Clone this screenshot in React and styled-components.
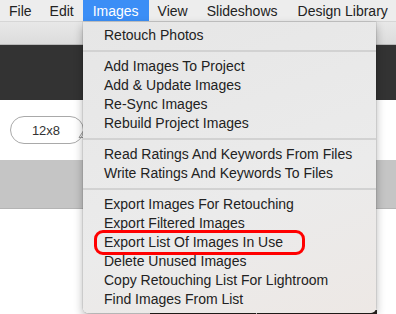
import React from 'react';
import styled, {createGlobalStyle} from 'styled-components';

const GlobalStyle = createGlobalStyle`
  html, body {
    margin: 0;
    padding: 0;
    background: #ffffff;
    font-family: "Liberation Sans", Arial, sans-serif;
    overflow: hidden;
  }
`;

const Screen = styled.div`
  position: relative;
  width: 396px;
  height: 314px;
  overflow: hidden;
  display: flex;
  flex-direction: column;
`;

const MenuBar = styled.div`
  height: 22px;
  display: flex;
  align-items: stretch;
  background: #ededed;
  border-bottom: 1px solid #d6d6d6;
  box-sizing: border-box;
`;

const MenuTitle = styled.div`
  display: flex;
  align-items: center;
  padding: 0 ${({$pad}) => $pad}px;
  font-size: 14px;
  color: ${({$active}) => ($active ? '#ffffff' : '#222222')};
  background: ${({$active}) => ($active ? '#3b8ef6' : 'transparent')};
  white-space: nowrap;
`;

const Toolbar = styled.div`
  height: 22px;
  background: linear-gradient(#e8e8e8, #dcdcdc);
  border-bottom: 1px solid #b9b9b9;
`;

const DarkBand = styled.div`
  height: 55px;
  background: #333333;
`;

const SizeRow = styled.div`
  height: 60px;
  display: flex;
  align-items: center;
  padding-left: 10px;
  gap: 0;
  background: #ffffff;
`;

const SizePill = styled.div`
  width: 74px;
  height: 28px;
  box-sizing: border-box;
  border: 1px solid #a9a9a9;
  border-radius: 14px;
  display: flex;
  align-items: center;
  justify-content: center;
  padding-right: 2px;
  font-size: 13px;
  color: #333;
`;

const PillIcon = styled.svg`
  margin-left: -6px;
  margin-top: 6px;
  flex: none;
`;

const GrayBand = styled.div`
  height: 48px;
  background: #c5c5c5;
  border-bottom: 1px solid #b4b4b4;
`;

const Content = styled.div`
  flex: 1;
  background: #ffffff;
  display: flex;
  flex-direction: column;
  justify-content: flex-end;
  padding-left: 150px;
`;

const Thumbs = styled.div`
  height: 4px;
  display: flex;
  gap: 1px;
`;

const Thumb = styled.div`
  width: ${({$w}) => $w}px;
  background: #2b2522;
`;

const Dropdown = styled.div`
  position: absolute;
  top: 22px;
  left: 83px;
  width: 293px;
  padding: 4px 0 4px;
  box-sizing: border-box;
  background: linear-gradient(160deg, #e6e6e6 0%, #ebebeb 60%, #ede8e5 100%);
  border-radius: 0 0 5px 5px;
  box-shadow: 0 4px 10px rgba(0, 0, 0, 0.3), 0 0 0 0.5px rgba(0, 0, 0, 0.15);
  z-index: 10;
`;

const Item = styled.div`
  position: relative;
  height: 19px;
  line-height: 19px;
  padding-left: 21px;
  font-size: 14px;
  color: #222222;
  white-space: nowrap;

  ${({$marked}) =>
    $marked &&
    `
    &::after {
      content: '';
      position: absolute;
      left: 11px;
      top: -3px;
      width: 211px;
      height: 25px;
      box-sizing: border-box;
      border: 3px solid #ff0000;
      border-radius: 9px;
    }
  `}
`;

const Separator = styled.div`
  height: 12px;
  display: flex;
  align-items: center;

  &::before {
    content: '';
    flex: 1;
    height: 2px;
    background: #d2d2d2;
  }
`;

const menuTitles = [
  {label: 'File', pad: 9},
  {label: 'Edit', pad: 9},
  {label: 'Images', pad: 10, active: true},
  {label: 'View', pad: 9},
  {label: 'Slideshows', pad: 10},
  {label: 'Design Library', pad: 10},
];

const groups = [
  ['Retouch Photos'],
  ['Add Images To Project', 'Add & Update Images', 'Re-Sync Images', 'Rebuild Project Images'],
  ['Read Ratings And Keywords From Files', 'Write Ratings And Keywords To Files'],
  [
    'Export Images For Retouching',
    'Export Filtered Images',
    'Export List Of Images In Use',
    'Delete Unused Images',
    'Copy Retouching List For Lightroom',
    'Find Images From List',
  ],
];

const App = () => (
  <Screen>
    <GlobalStyle />
    <MenuBar>
      {menuTitles.map((m) => (
        <MenuTitle key={m.label} $pad={m.pad} $active={m.active}>
          {m.label}
        </MenuTitle>
      ))}
    </MenuBar>
    <Toolbar />
    <DarkBand />
    <SizeRow>
      <SizePill>12x8</SizePill>
      <PillIcon width="12" height="9" viewBox="0 0 12 9">
        <path d="M1 8.5 L6 1 L11 8.5 Z" fill="none" stroke="#9a9a9a" strokeWidth="1" />
      </PillIcon>
    </SizeRow>
    <GrayBand />
    <Content>
      <Thumbs>
        <Thumb $w={106} />
        <Thumb $w={120} />
      </Thumbs>
    </Content>

    <Dropdown>
      {groups.map((group, gi) => (
        <React.Fragment key={gi}>
          {gi > 0 && <Separator />}
          {group.map((label) => (
            <Item key={label} $marked={label === 'Export List Of Images In Use'}>
              {label}
            </Item>
          ))}
        </React.Fragment>
      ))}
    </Dropdown>
  </Screen>
);

export default App;
